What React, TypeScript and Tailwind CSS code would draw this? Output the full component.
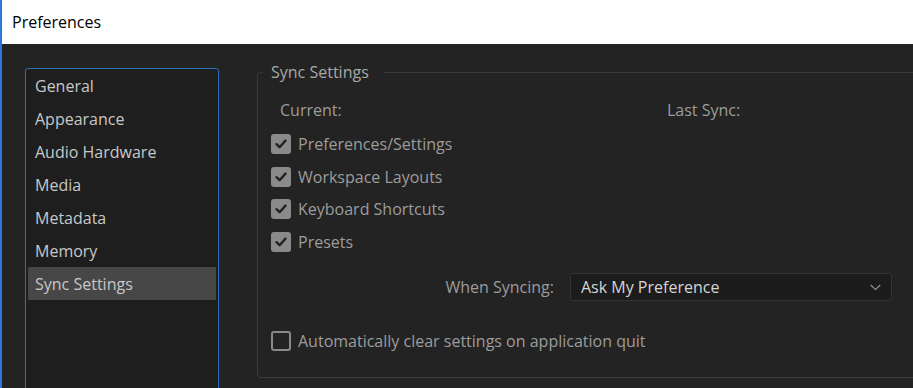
const sections = ['General', 'Appearance', 'Audio Hardware', 'Media', 'Metadata', 'Memory', 'Sync Settings'];

const syncItems = ['Preferences/Settings', 'Workspace Layouts', 'Keyboard Shortcuts', 'Presets'];

function CheckBox({ checked }: { checked: boolean }) {
  if (!checked) {
    return <span className="h-[20px] w-[20px] shrink-0 rounded-[3px] border-2 border-[#8a8a8a]" />;
  }
  return (
    <span className="flex h-[20px] w-[20px] shrink-0 items-center justify-center rounded-[3px] bg-[#8a8a8a]">
      <svg width="14" height="14" viewBox="0 0 14 14" fill="none">
        <path d="M2.5 7.2 L5.6 10.2 L11.5 3.6" stroke="#232323" strokeWidth="2.4" strokeLinecap="round" strokeLinejoin="round" />
      </svg>
    </span>
  );
}

export default function App() {
  const selected = 'Sync Settings';

  return (
    <div className="flex h-[388px] w-[913px] flex-col overflow-hidden border-l-2 border-[#2b79d6] font-['Open_Sans',sans-serif]">
      <div className="flex h-[44px] shrink-0 items-center bg-white pl-[10px] text-[16px] text-black">Preferences</div>
      <div className="flex flex-1 bg-[#232323] pl-[23px] pt-[24px]">
        <ul className="h-[340px] w-[194px] shrink-0 rounded-t-[3px] border border-[#2d6fb8] bg-[#1e1e1e] px-[2px]">
          {sections.map((s) => (
            <li
              key={s}
              className={`flex h-[33px] items-center pl-[7px] text-[16px] text-[#c8c8c8] ${s === selected ? 'bg-[#474747]' : ''}`}
            >
              {s}
            </li>
          ))}
        </ul>
        <fieldset className="-mt-[7px] ml-[38px] h-[317px] w-[680px] shrink-0 rounded-[4px] border border-[#3a3a3a] pl-[13px] text-[16px] text-[#9c9c9c]">
          <legend className="-ml-[8px] h-[22px] pl-[8px] pr-[15px] leading-[22px] text-[#a8a8a8]">Sync Settings</legend>
          <div className="mt-[17px] flex h-[20px] items-center pl-[9px]">
            <span className="w-[387px]">Current:</span>
            <span>Last Sync:</span>
          </div>
          <div className="mt-[8px] flex flex-col">
            {syncItems.map((item) => (
              <label key={item} className="flex h-[32.5px] items-center gap-[7px]">
                <CheckBox checked />
                <span>{item}</span>
              </label>
            ))}
          </div>
          <div className="mt-[15px] flex h-[28px] items-center">
            <span className="w-[283px] text-right">When Syncing:</span>
            <div className="ml-[16px] flex h-[28px] w-[322px] items-center justify-between rounded-[3px] border border-[#333333] bg-[#1c1c1c] pl-[10px] pr-[10px] text-[#d4d4d4]">
              <span>Ask My Preference</span>
              <svg width="11" height="7" viewBox="0 0 11 7" fill="none">
                <path d="M0.8 1 L5.5 5.6 L10.2 1" stroke="#9a9a9a" strokeWidth="1.1" />
              </svg>
            </div>
          </div>
          <label className="mt-[28px] flex h-[24px] items-center gap-[7px]">
            <CheckBox checked={false} />
            <span>Automatically clear settings on application quit</span>
          </label>
        </fieldset>
      </div>
    </div>
  );
}
